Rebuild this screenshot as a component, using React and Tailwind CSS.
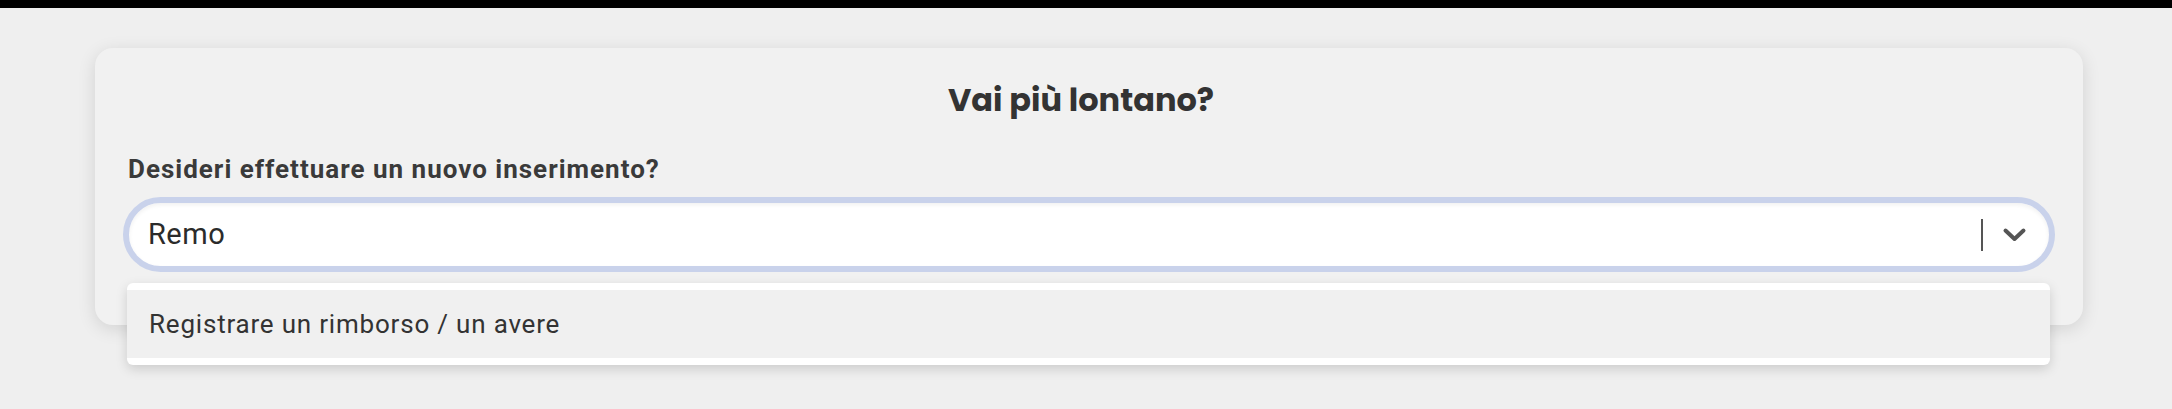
import { useState } from 'react';

const OPTIONS = ['Registrare un rimborso / un avere'];

function Chevron() {
  return (
    <svg width="25" height="16" viewBox="0 0 25 16" className="ml-[19px] shrink-0">
      <polyline
        points="3.5,3.5 12.5,12 21.5,3.5"
        fill="none"
        stroke="#555555"
        strokeWidth="4"
        strokeLinecap="round"
        strokeLinejoin="round"
      />
    </svg>
  );
}

export default function App() {
  const [value] = useState('Remo');
  const [active, setActive] = useState(0);

  return (
    <div className="min-h-screen bg-[#efefef] font-['Roboto',sans-serif]">
      <div className="h-2 bg-black" />

      <div className="pt-[40px] pl-[95px] pr-[89px]">
        <div className="rounded-[18px] bg-[#f1f1f1] px-[28px] pt-[32px] pb-[53px] shadow-[0_4px_18px_rgba(0,0,0,0.12)]">
          <h2 className="pr-[16px] text-center font-['Poppins','Inter',sans-serif] text-[32px] font-bold leading-[40px] text-[#333333]">
            Vai più lontano?
          </h2>

          <label className="mt-[33px] mb-[12px] block pl-[5px] text-[26px] font-bold leading-[32px] tracking-[1px] text-[#3a3a3a]">
            Desideri effettuare un nuovo inserimento?
          </label>

          {/* Select + open menu */}
          <div className="relative">
            <div className="flex h-[75px] items-center rounded-full border-[6px] border-[#c9d2eb] bg-white pl-[19px] pr-[22px] shadow-[inset_0_2px_4px_rgba(0,0,0,0.06)]">
              <span className="flex-1 text-[29px] tracking-[0.5px] text-[#2b2b2b]">{value}</span>
              <span className="h-[32px] w-[2px] bg-[#555555]" />
              <Chevron />
            </div>

            <div className="absolute top-[86px] left-[4px] right-[5px] z-10 rounded-[6px] bg-white py-[7px] shadow-[0_4px_12px_rgba(0,0,0,0.15)]">
              {OPTIONS.map((opt, i) => (
                <div
                  key={opt}
                  onMouseEnter={() => setActive(i)}
                  className={
                    'flex h-[68px] items-center pl-[22px] text-[26px] tracking-[0.8px] text-[#333333] ' +
                    (active === i ? 'bg-[#f0f0f0]' : 'bg-white')
                  }
                >
                  {opt}
                </div>
              ))}
            </div>
          </div>
        </div>
      </div>
    </div>
  );
}
